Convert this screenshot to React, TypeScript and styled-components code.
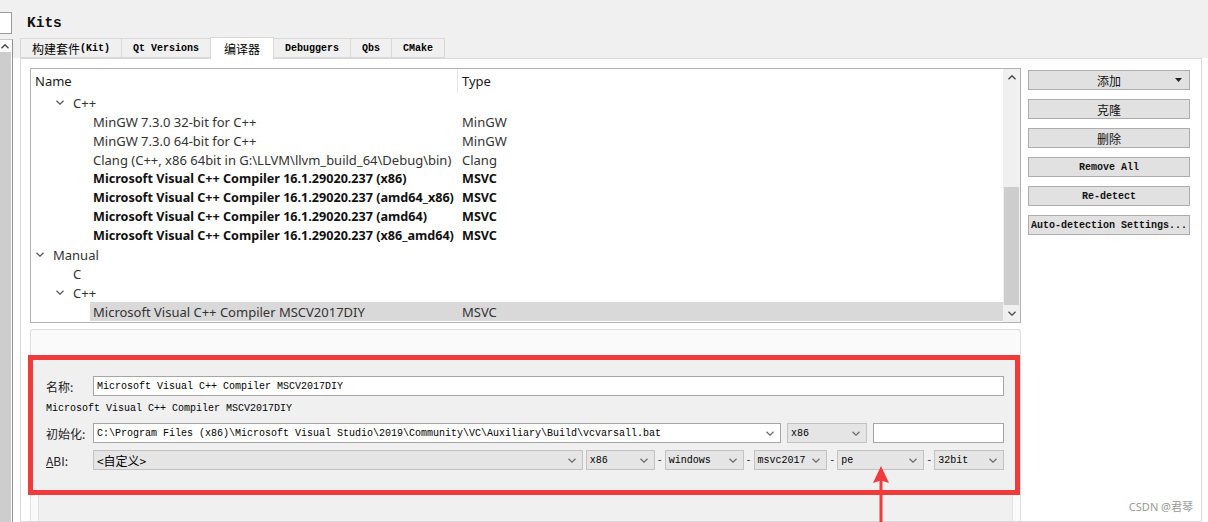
import React from 'react';
import styled, { createGlobalStyle } from 'styled-components';

interface TreeItem {
    name: string;
    type?: string;
    depth: number;
    expander?: boolean;
    bold?: boolean;
    selected?: boolean;
}

const tabs = ['构建套件|(Kit)', 'Qt Versions', '编译器', 'Debuggers', 'Qbs', 'CMake'];

const treeItems: TreeItem[] = [
    { name: 'C++', depth: 1, expander: true },
    { name: 'MinGW 7.3.0 32-bit for C++', type: 'MinGW', depth: 2 },
    { name: 'MinGW 7.3.0 64-bit for C++', type: 'MinGW', depth: 2 },
    { name: 'Clang (C++, x86 64bit in G:\\LLVM\\llvm_build_64\\Debug\\bin)', type: 'Clang', depth: 2 },
    { name: 'Microsoft Visual C++ Compiler 16.1.29020.237 (x86)', type: 'MSVC', depth: 2, bold: true },
    { name: 'Microsoft Visual C++ Compiler 16.1.29020.237 (amd64_x86)', type: 'MSVC', depth: 2, bold: true },
    { name: 'Microsoft Visual C++ Compiler 16.1.29020.237 (amd64)', type: 'MSVC', depth: 2, bold: true },
    { name: 'Microsoft Visual C++ Compiler 16.1.29020.237 (x86_amd64)', type: 'MSVC', depth: 2, bold: true },
    { name: 'Manual', depth: 0, expander: true },
    { name: 'C', depth: 1 },
    { name: 'C++', depth: 1, expander: true },
    { name: 'Microsoft Visual C++ Compiler MSCV2017DIY', type: 'MSVC', depth: 2, selected: true },
];

const buttons = ['添加', '克隆', '删除', 'Remove All', 'Re-detect', 'Auto-detection Settings...'];

const abiParts = [
    { label: 'x86', width: 69 },
    { label: 'windows', width: 79 },
    { label: 'msvc2017', width: 74 },
    { label: 'pe', width: 87 },
    { label: '32bit', width: 70 },
];

const Chevron = ({ color = '#6a6a6a' }: { color?: string }) => (
    <svg width="8" height="5" viewBox="0 0 8 5">
        <path d="M0.5 0.8 L4 4.2 L7.5 0.8" fill="none" stroke={color} strokeWidth="1.2" />
    </svg>
);

const ChevronUp = () => (
    <svg width="8" height="5" viewBox="0 0 8 5">
        <path d="M0.5 4.2 L4 0.8 L7.5 4.2" fill="none" stroke="#444" strokeWidth="1.4" />
    </svg>
);

const isCjk = (s: string) => /[\u4e00-\u9fff]/.test(s);

const MixedText = ({ text }: { text: string }) => (
    <>
        {text.split('|').map((part, i) => (isCjk(part) ? <Cjk key={i}>{part}</Cjk> : <span key={i}>{part}</span>))}
    </>
);

const App = () => {
    return (
        <Screen>
            <GlobalStyle />
            <SideStrip>
                <SideInput />
                <SideScroll>
                    <SideArrow>
                        <ChevronUp />
                    </SideArrow>
                    <SideTrack />
                </SideScroll>
            </SideStrip>
            <Main>
                <Title>Kits</Title>
                <TabBar>
                    {tabs.map((t) => (
                        <Tab key={t} $active={t === '编译器'}>
                            <MixedText text={t} />
                        </Tab>
                    ))}
                </TabBar>
                <TabPane>
                    <LeftCol>
                        <Tree>
                            <TreeBody>
                                <TreeHeader>
                                    <HeaderCell $w={427}>Name</HeaderCell>
                                    <HeaderCell>Type</HeaderCell>
                                </TreeHeader>
                                {treeItems.map((item, i) => (
                                    <Row key={i} $depth={item.depth}>
                                        <Toggle>{item.expander && <Chevron color="#555" />}</Toggle>
                                        <Item $selected={!!item.selected} $bold={!!item.bold}>
                                            <NameCell $depth={item.depth}>{item.name}</NameCell>
                                            <TypeCell>{item.type}</TypeCell>
                                        </Item>
                                    </Row>
                                ))}
                            </TreeBody>
                            <VScroll>
                                <ScrollBtn>
                                    <ChevronUp />
                                </ScrollBtn>
                                <ScrollTrack>
                                    <ScrollThumb />
                                </ScrollTrack>
                                <ScrollBtn>
                                    <Chevron color="#444" />
                                </ScrollBtn>
                            </VScroll>
                        </Tree>
                        <Details>
                            <InnerPanel>
                                <FormBox>
                                    <FormRow $mt={0}>
                                        <Label>名称:</Label>
                                        <TextField $grow>Microsoft Visual C++ Compiler MSCV2017DIY</TextField>
                                    </FormRow>
                                    <FormRow $mt={2}>
                                        <PlainText>Microsoft Visual C++ Compiler MSCV2017DIY</PlainText>
                                    </FormRow>
                                    <FormRow $mt={5}>
                                        <Label>初始化:</Label>
                                        <Combo $w={688} $white>
                                            <span>
                                                C:\Program Files (x86)\Microsoft Visual Studio\2019\Community\VC\Auxiliary\Build\vcvarsall.bat
                                            </span>
                                            <Chevron />
                                        </Combo>
                                        <Combo $w={80} $ml={6}>
                                            <span>x86</span>
                                            <Chevron />
                                        </Combo>
                                        <TextField $grow $ml={6} />
                                    </FormRow>
                                    <FormRow $mt={7}>
                                        <Label>
                                            <u>A</u>BI:
                                        </Label>
                                        <Combo $w={491}>
                                            <Cjk>&lt;自定义&gt;</Cjk>
                                            <Chevron />
                                        </Combo>
                                        {abiParts.map((p, i) => (
                                            <React.Fragment key={p.label}>
                                                {i > 0 ? <Dash>-</Dash> : <Spacer />}
                                                <Combo $w={p.width}>
                                                    <span>{p.label}</span>
                                                    <Chevron />
                                                </Combo>
                                            </React.Fragment>
                                        ))}
                                    </FormRow>
                                </FormBox>
                            </InnerPanel>
                        </Details>
                    </LeftCol>
                    <ButtonCol>
                        {buttons.map((b, i) => (
                            <Button key={b}>
                                {isCjk(b) ? <Cjk>{b}</Cjk> : b}
                                {i === 0 && (
                                    <DropMark>
                                        <svg width="7" height="4" viewBox="0 0 7 4">
                                            <path d="M0 0 L7 0 L3.5 4 Z" fill="#222" />
                                        </svg>
                                    </DropMark>
                                )}
                            </Button>
                        ))}
                    </ButtonCol>
                </TabPane>
            </Main>
            <Arrow width="20" height="56" viewBox="0 0 20 56">
                <path d="M10 0 L18 17 L11.5 15 L11.5 56 L8.5 56 L8.5 15 L2 17 Z" fill="#ef3b3b" />
            </Arrow>
            <Watermark>CSDN @君琴</Watermark>
        </Screen>
    );
};

const GlobalStyle = createGlobalStyle`
    html, body {
        margin: 0;
        padding: 0;
        background: #ffffff;
    }
    * {
        box-sizing: border-box;
    }
`;

const Screen = styled.div`
    position: relative;
    width: 1208px;
    height: 522px;
    overflow: hidden;
    display: flex;
    background: linear-gradient(to bottom, #f0f0f0 0, #f0f0f0 58px, #ffffff 58px);
    font-family: 'Liberation Mono', 'Noto Sans CJK SC', monospace;
    font-size: 10px;
    color: #000;
`;
const SideStrip = styled.div`
    width: 13px;
    display: flex;
    flex-direction: column;
    padding-top: 12px;
`;
const SideInput = styled.div`
    height: 22px;
    width: 12px;
    background: #fff;
    border: 1px solid #9a9a9a;
    border-left: none;
`;
const SideScroll = styled.div`
    flex: 1;
    margin-top: 5px;
    width: 13px;
    display: flex;
    flex-direction: column;
    border-right: 1px solid #8f8f8f;
    border-top: 1px solid #c9c9c9;
    background: #fff;
`;
const SideArrow = styled.div`
    height: 12px;
    display: flex;
    align-items: center;
    justify-content: center;
    padding-right: 2px;
`;
const SideTrack = styled.div`
    flex: 1;
    width: 11px;
    background: #cdcdcd;
`;
const Main = styled.div`
    flex: 1;
    display: flex;
    flex-direction: column;
    padding-right: 6px;
`;
const Title = styled.div`
    height: 37px;
    padding: 15px 0 0 14px;
    font-size: 14.5px;
    font-weight: bold;
    background: #f0f0f0;
    color: #111;
`;
const TabBar = styled.div`
    height: 21px;
    display: flex;
    align-items: flex-end;
    padding-left: 8px;
    background: #f0f0f0;
    position: relative;
    z-index: 1;
`;
const Tab = styled.div<{ $active: boolean }>`
    height: ${(p) => (p.$active ? '22px' : '20px')};
    padding: 0 ${(p) => (p.$active ? '13px' : '11px')};
    margin-bottom: ${(p) => (p.$active ? '-1px' : '0')};
    display: flex;
    align-items: center;
    background: ${(p) => (p.$active ? '#ffffff' : '#f0f0f0')};
    border: 1px solid #d9d9d9;
    border-bottom: ${(p) => (p.$active ? 'none' : '1px solid #d9d9d9')};
    margin-left: -1px;
    color: #000;
    font-weight: bold;
`;
const Cjk = styled.span`
    font-family: 'Noto Sans CJK SC', sans-serif;
    font-size: 12px;
    font-weight: normal;
`;
const TabPane = styled.div`
    flex: 1;
    margin-left: 7px;
    background: #ffffff;
    border: 1px solid #d9d9d9;
    display: flex;
    gap: 7px;
    padding: 9px 0 0 9px;
`;
const LeftCol = styled.div`
    width: 991px;
    display: flex;
    flex-direction: column;
`;
const Tree = styled.div`
    height: 255px;
    border: 1px solid #b2b2b2;
    display: flex;
    background: #fff;
    font-family: 'Noto Sans', 'Open Sans', sans-serif;
    font-size: 13px;
`;
const TreeBody = styled.div`
    flex: 1;
    display: flex;
    flex-direction: column;
`;
const TreeHeader = styled.div`
    height: 24px;
    display: flex;
    color: #1a1a1a;
`;
const HeaderCell = styled.div<{ $w?: number }>`
    width: ${(p) => (p.$w ? `${p.$w}px` : 'auto')};
    flex: ${(p) => (p.$w ? 'none' : '1')};
    padding-left: 4px;
    display: flex;
    align-items: center;
    border-right: ${(p) => (p.$w ? '1px solid #e5e5e5' : 'none')};
`;
const Row = styled.div<{ $depth: number }>`
    height: 19px;
    display: flex;
    padding-left: ${(p) => p.$depth * 20}px;
`;
const Toggle = styled.div`
    width: 19px;
    display: flex;
    align-items: center;
    justify-content: center;
    padding-right: 1px;
`;
const Item = styled.div<{ $selected: boolean; $bold: boolean }>`
    flex: 1;
    display: flex;
    align-items: center;
    background: ${(p) => (p.$selected ? '#d9d9d9' : 'transparent')};
    font-weight: ${(p) => (p.$bold ? 'bold' : 'normal')};
    font-size: ${(p) => (p.$bold ? '12.6px' : '13px')};
    color: ${(p) => (p.$bold ? '#111' : '#333')};
`;
const NameCell = styled.div<{ $depth: number }>`
    width: ${(p) => 428 - (p.$depth * 20 + 19)}px;
    padding-left: 3px;
    white-space: nowrap;
`;
const TypeCell = styled.div`
    padding-left: 3px;
`;
const VScroll = styled.div`
    width: 17px;
    display: flex;
    flex-direction: column;
    background: #f0f0f0;
`;
const ScrollBtn = styled.div`
    height: 17px;
    display: flex;
    align-items: center;
    justify-content: center;
`;
const ScrollTrack = styled.div`
    flex: 1;
    display: flex;
    flex-direction: column;
    justify-content: flex-end;
    padding: 0 1px;
`;
const ScrollThumb = styled.div`
    height: 118px;
    background: #cdcdcd;
`;
const Details = styled.div`
    flex: 1;
    margin-top: 6px;
    border: 1px solid #dedede;
    border-bottom: none;
    border-radius: 3px 3px 0 0;
    background: #fafafa;
    padding: 25px 7px 0;
    display: flex;
    flex-direction: column;
`;
const InnerPanel = styled.div`
    flex: 1;
    background: #f0f0f0;
    border: 1px solid #e2e2e2;
    border-bottom: none;
`;
const FormBox = styled.div`
    margin: -1px -8px 0 -11px;
    height: 140px;
    border: 5px solid #ef3b3b;
    background: #f0f0f0;
    padding: 16px 11px 0 13px;
    display: flex;
    flex-direction: column;
`;
const FormRow = styled.div<{ $mt: number }>`
    height: 20px;
    margin-top: ${(p) => p.$mt}px;
    display: flex;
    align-items: center;
`;
const Label = styled.div`
    width: 47px;
    font-family: 'Noto Sans CJK SC', sans-serif;
    font-size: 12px;
    color: #222;
    & u {
        text-decoration-thickness: 1px;
    }
`;
const PlainText = styled.div`
    color: #000;
`;
const TextField = styled.div<{ $grow?: boolean; $ml?: number }>`
    flex: ${(p) => (p.$grow ? '1' : 'none')};
    height: 20px;
    margin-left: ${(p) => p.$ml || 0}px;
    background: #fff;
    border: 1px solid #a6a6a6;
    display: flex;
    align-items: center;
    padding-left: 3px;
    color: #000;
`;
const Combo = styled.div<{ $w: number; $white?: boolean; $ml?: number }>`
    width: ${(p) => p.$w}px;
    height: 20px;
    margin-left: ${(p) => p.$ml || 0}px;
    background: ${(p) => (p.$white ? '#ffffff' : '#e5e5e5')};
    border: 1px solid ${(p) => (p.$white ? '#a6a6a6' : '#c2c2c2')};
    display: flex;
    align-items: center;
    justify-content: space-between;
    padding: 0 6px 0 3px;
    color: #000;
    white-space: nowrap;
`;
const Dash = styled.div`
    width: 10px;
    text-align: center;
    color: #333;
`;
const Spacer = styled.div`
    width: 3px;
`;
const ButtonCol = styled.div`
    width: 162px;
    display: flex;
    flex-direction: column;
    gap: 9px;
    padding-top: 2px;
`;
const Button = styled.div`
    position: relative;
    height: 20px;
    background: #e1e1e1;
    border: 1px solid #adadad;
    display: flex;
    align-items: center;
    justify-content: center;
    color: #111;
    white-space: nowrap;
    font-weight: bold;
`;
const DropMark = styled.span`
    position: absolute;
    right: 7px;
    top: 7px;
    display: flex;
`;
const Arrow = styled.svg`
    position: absolute;
    left: 871px;
    top: 466px;
`;
const Watermark = styled.div`
    position: absolute;
    right: 15px;
    bottom: 8px;
    font-family: 'Noto Sans', 'Noto Sans CJK SC', sans-serif;
    font-size: 11px;
    color: #9a9a9a;
`;

export default App;
